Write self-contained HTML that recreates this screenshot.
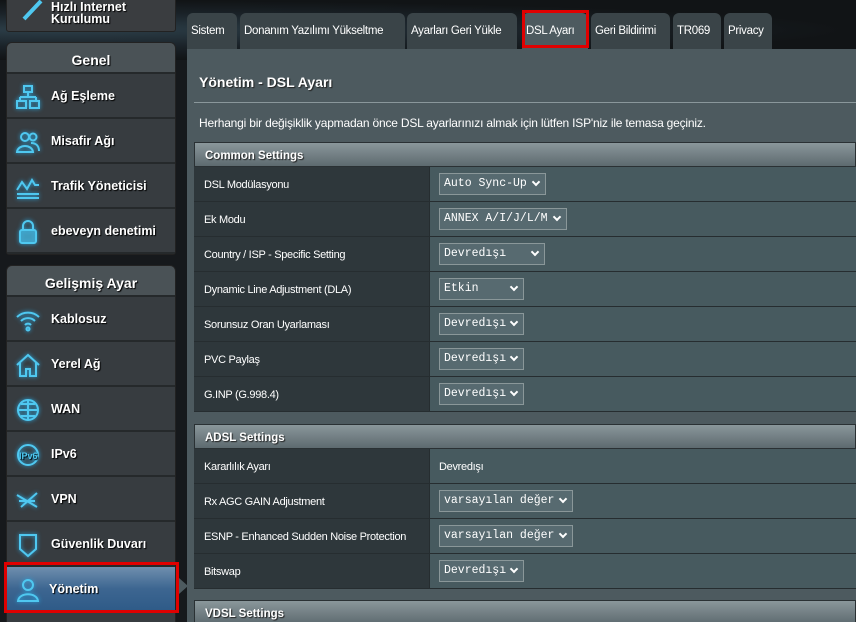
<!DOCTYPE html>
<html><head><meta charset="utf-8">
<style>
*{box-sizing:border-box;margin:0;padding:0}
html,body{width:856px;height:622px;overflow:hidden}
body{background:#16191c;font-family:"Liberation Sans",Arial,sans-serif;position:relative;color:#fff;white-space:nowrap}
.bgglow{position:absolute;left:0;top:0;width:856px;height:60px;background:radial-gradient(ellipse at 60px 30px,#2c3e48 0,#1a2228 40%,#111416 70%)}
.panel{position:absolute;left:6px;width:170px;background:#373c40;border:1px solid #222;border-radius:6px 6px 3px 3px;overflow:hidden}
.ph{height:31px;background:#4a5256;text-align:center;font-weight:bold;font-size:14px;line-height:34px;text-shadow:1px 1px 1px #000;border-bottom:2px solid #25292b}
.it{height:45px;border-bottom:2px solid #25292b;position:relative;font-weight:bold;font-size:12.5px;line-height:45px;padding-left:44px;text-shadow:1px 1px 1px #000}
.it svg{position:absolute;left:8px;top:10px;width:26px;height:26px;fill:none;stroke:#4fc8f0;stroke-width:2;filter:drop-shadow(0 0 2px #2aa8e0)}
.tab{position:absolute;top:13px;height:36px;background:#3a4448;border-radius:6px 6px 0 0;font-size:11.5px;letter-spacing:-0.3px;line-height:36px;padding:0 4px;color:#fff;overflow:hidden}
.main{position:absolute;left:187px;top:49px;width:669px;height:573px;background:#4d5a5f}
.tbl{position:absolute;left:194px;width:662px}
.h{height:25px;background:linear-gradient(#8a979b,#5d6a6f);font-weight:bold;font-size:11.5px;line-height:27px;padding-left:10px;border:1px solid #2a3134;text-shadow:1px 1px 1px #222}
.r{height:35px;display:flex;border-bottom:1px solid #262d30}
.r .l{width:236px;background:#2e373b;font-size:11px;letter-spacing:-0.3px;line-height:36px;padding-left:10px;border-right:1px solid #262d30;overflow:hidden}
.r .v{flex:1;background:#475a5f;padding-left:9px;padding-top:6px;font-size:11px;letter-spacing:-0.3px}
.sel{display:inline-block;height:22px;background:#576a70;border:1px solid #8a9799;font-family:"Liberation Mono","DejaVu Sans Mono",monospace;font-size:11.5px;letter-spacing:0;line-height:20px;padding-left:4px;position:relative;padding-right:18px}
.sel:after{content:"";position:absolute;right:6px;top:5px;width:4px;height:4px;border-right:2px solid #fff;border-bottom:2px solid #fff;transform:rotate(45deg)}
</style></head><body>
<div class="bgglow"></div>
<div class="panel" style="top:-16px;height:48px;background:#3a3d40">
 <svg style="position:absolute;left:14px;top:10px" width="26" height="26"><path d="M3 24 L20 6" stroke="#4fc8f0" stroke-width="4"/></svg>
 <div style="position:absolute;left:44px;top:16px;font-weight:bold;font-size:12.5px;line-height:12px;text-shadow:1px 1px 1px #000">Hızlı Internet<br>Kurulumu</div>
</div>
<div class="panel" style="top:42px;height:213px">
 <div class="ph">Genel</div>
 <div class="it"><svg viewBox="0 0 26 26"><rect x="9" y="2" width="8" height="6"/><path d="M13 8v5M5 13h16M5 13v4M21 13v4"/><rect x="2" y="17" width="9" height="7"/><rect x="15" y="17" width="9" height="7"/></svg>Ağ Eşleme</div>
 <div class="it"><svg viewBox="0 0 26 26"><circle cx="10" cy="8" r="4"/><circle cx="18" cy="8" r="3.5"/><path d="M2 23c1-8 15-8 16 0zM16 14c5 0 8 3 8 8"/></svg>Misafir Ağı</div>
 <div class="it"><svg viewBox="0 0 26 26"><path d="M2 16l5-8 5 7 5-9 3 5h4M2 20h22M2 24h22"/></svg>Trafik Yöneticisi</div>
 <div class="it"><svg viewBox="0 0 26 26"><path d="M8 11V7a5 5 0 0 1 10 0v4"/><rect x="5" y="11" width="16" height="13" rx="2" fill="#4fc8f0" fill-opacity=".5"/></svg>ebeveyn denetimi</div>
</div>
<div class="panel" style="top:265px;height:360px">
 <div class="ph">Gelişmiş Ayar</div>
 <div class="it"><svg viewBox="0 0 26 26"><path d="M2 10a16 16 0 0 1 22 0M6 14a10 10 0 0 1 14 0M10 18a4 4 0 0 1 6 0"/><circle cx="13" cy="22" r="1.5"/></svg>Kablosuz</div>
 <div class="it"><svg viewBox="0 0 26 26"><path d="M2 13L13 3l11 10M5 11v13h6v-7h4v7h6V11"/></svg>Yerel Ağ</div>
 <div class="it"><svg viewBox="0 0 26 26"><circle cx="13" cy="13" r="10"/><path d="M3 13h20M13 3v20M6 7h14M6 19h14"/></svg>WAN</div>
 <div class="it"><svg viewBox="0 0 26 26"><circle cx="13" cy="13" r="10"/><text x="4" y="17" font-size="9" fill="#4fc8f0" stroke="none">IPv6</text></svg>IPv6</div>
 <div class="it"><svg viewBox="0 0 26 26"><path d="M2 8l20 12M6 20L22 6M4 14h16"/></svg>VPN</div>
 <div class="it"><svg viewBox="0 0 26 26"><path d="M5 3h16v14l-8 7-8-7z"/></svg>Güvenlik Duvarı</div>
 <div class="it" style="background:linear-gradient(#6f8fae,#3d6691 50%,#2f5b88);padding-left:42px"><svg viewBox="0 0 26 26"><circle cx="13" cy="8" r="5"/><path d="M3 24c1-9 19-9 20 0z"/></svg>Yönetim</div>
</div>
<div style="position:absolute;left:4px;top:562px;width:175px;height:51px;border:3px solid #e00000"></div>
<div style="position:absolute;left:179px;top:578px;width:0;height:0;border-top:8px solid transparent;border-bottom:8px solid transparent;border-left:9px solid #4d5a5f"></div>

<div class="tab" style="left:187px;width:50px">Sistem</div>
<div class="tab" style="left:240px;width:165px">Donanım Yazılımı Yükseltme</div>
<div class="tab" style="left:407px;width:110px">Ayarları Geri Yükle</div>
<div class="tab" style="left:522px;width:66px;background:#4d5a5f">DSL Ayarı</div>
<div style="position:absolute;left:522px;top:10px;width:67px;height:38px;border:3px solid #e00000"></div>
<div class="tab" style="left:591px;width:79px">Geri Bildirimi</div>
<div class="tab" style="left:673px;width:48px">TR069</div>
<div class="tab" style="left:724px;width:48px">Privacy</div>

<div class="main">
 <div style="position:absolute;left:12px;top:25px;font-weight:bold;font-size:14px;text-shadow:1px 1px 1px #222">Yönetim - DSL Ayarı</div>
 <div style="position:absolute;left:7px;top:53px;width:662px;height:1px;background:#8a979b"></div>
 <div style="position:absolute;left:12px;top:67px;font-size:12px;letter-spacing:-0.2px">Herhangi bir değişiklik yapmadan önce DSL ayarlarınızı almak için lütfen ISP'niz ile temasa geçiniz.</div>
</div>
<div class="tbl" style="top:142px">
 <div class="h">Common Settings</div>
 <div class="r"><div class="l">DSL Modülasyonu</div><div class="v"><span class="sel">Auto Sync-Up</span></div></div>
 <div class="r"><div class="l">Ek Modu</div><div class="v"><span class="sel">ANNEX A/I/J/L/M</span></div></div>
 <div class="r"><div class="l">Country / ISP - Specific Setting</div><div class="v"><span class="sel" style="width:106px">Devredışı</span></div></div>
 <div class="r"><div class="l">Dynamic Line Adjustment (DLA)</div><div class="v"><span class="sel" style="width:85px">Etkin</span></div></div>
 <div class="r"><div class="l">Sorunsuz Oran Uyarlaması</div><div class="v"><span class="sel" style="width:85px">Devredışı</span></div></div>
 <div class="r"><div class="l">PVC Paylaş</div><div class="v"><span class="sel" style="width:85px">Devredışı</span></div></div>
 <div class="r"><div class="l">G.INP (G.998.4)</div><div class="v"><span class="sel" style="width:85px">Devredışı</span></div></div>
</div>
<div class="tbl" style="top:424px">
 <div class="h">ADSL Settings</div>
 <div class="r"><div class="l">Kararlılık Ayarı</div><div class="v" style="padding-top:0;line-height:36px">Devredışı</div></div>
 <div class="r"><div class="l">Rx AGC GAIN Adjustment</div><div class="v"><span class="sel">varsayılan değer</span></div></div>
 <div class="r"><div class="l">ESNP - Enhanced Sudden Noise Protection</div><div class="v"><span class="sel">varsayılan değer</span></div></div>
 <div class="r"><div class="l">Bitswap</div><div class="v"><span class="sel" style="width:85px">Devredışı</span></div></div>
</div>
<div class="tbl" style="top:600px">
 <div class="h">VDSL Settings</div>
</div>
</body></html>
